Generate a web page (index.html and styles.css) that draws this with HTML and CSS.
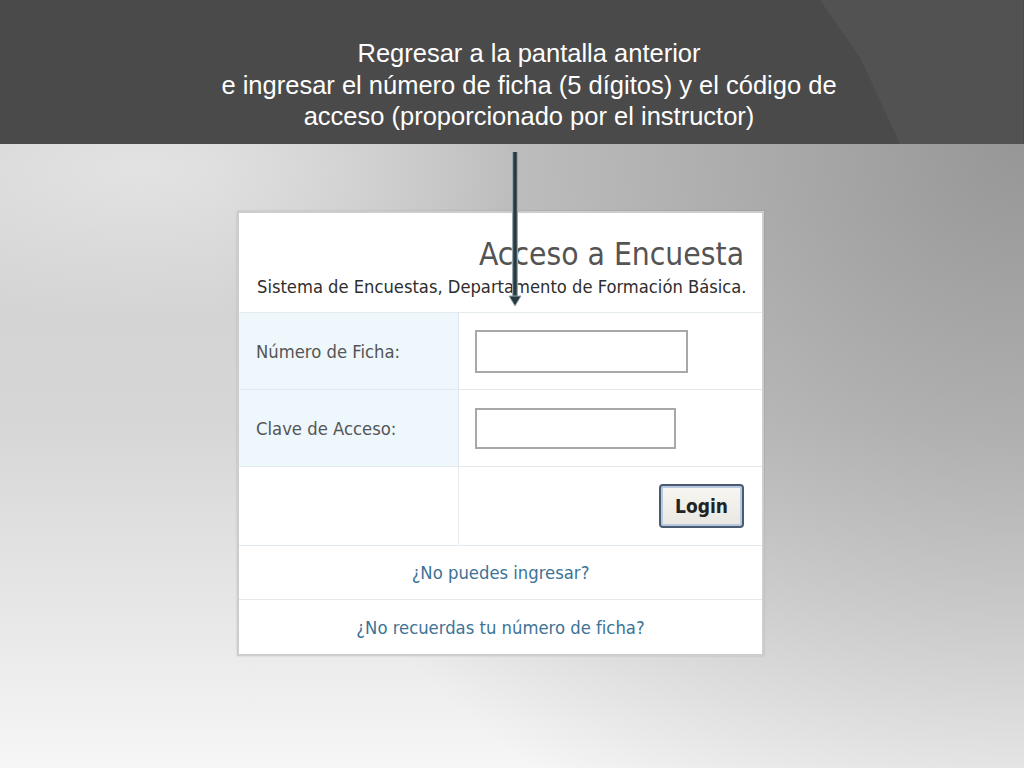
FILE: index.html
```html
<!DOCTYPE html>
<html lang="es">
<head>
<meta charset="utf-8">
<title>Acceso a Encuesta</title>
<link rel="stylesheet" href="styles.css">
</head>
<body>
<header class="banner">
  <div class="banner-panel"></div>
  <p class="banner-text">Regresar a la pantalla anterior<br>e ingresar el número de ficha (5 dígitos) y el código de<br>acceso (proporcionado por el instructor)</p>
</header>
<main class="stage">
  <section class="card">
    <div class="card-head">
      <h1 class="card-title">Acceso a Encuesta</h1>
      <p class="card-sub">Sistema de Encuestas, Departamento de Formación Básica.</p>
    </div>
    <div class="form-grid">
      <div class="cell label">Número de Ficha:</div>
      <div class="cell field"><span class="input input-wide"></span></div>
      <div class="cell label">Clave de Acceso:</div>
      <div class="cell field"><span class="input input-narrow"></span></div>
      <div class="cell blank"></div>
      <div class="cell action"><span class="btn">Login</span></div>
    </div>
    <div class="link-row link-first"><a class="link">¿No puedes ingresar?</a></div>
    <div class="link-row link-last"><a class="link">¿No recuerdas tu número de ficha?</a></div>
  </section>
  <svg class="arrow" width="14" height="160" viewBox="0 0 14 160" aria-hidden="true">
    <line x1="7" y1="0" x2="7" y2="148" stroke="#9aa8ae" stroke-width="6"/>
    <line x1="7" y1="0" x2="7" y2="148" stroke="#263a42" stroke-width="3.5"/>
    <polygon points="1,144 13,144 7,154" fill="#263a42" stroke="#9aa8ae" stroke-width="1"/>
  </svg>
</main>
</body>
</html>
```
FILE: styles.css
```css
* { box-sizing: border-box; }
html, body { margin: 0; padding: 0; }
body {
  width: 1024px;
  height: 768px;
  overflow: hidden;
  font-family: "DejaVu Sans Condensed", "DejaVu Sans", sans-serif;
  background:
    radial-gradient(ellipse 380px 150px at 140px 170px, rgba(232,232,232,0.75), rgba(232,232,232,0) 100%),
    radial-gradient(ellipse 820px 780px at 1024px 144px, rgba(140,140,140,0.85), rgba(140,140,140,0.45) 45%, rgba(140,140,140,0.12) 85%, rgba(140,140,140,0) 100%),
    linear-gradient(to bottom, #d2d2d2 0px, #d2d2d2 200px, #d6d6d6 420px, #e6e6e6 600px, #f6f6f6 768px);
}

.banner {
  position: relative;
  height: 144px;
  background: #4a4a4a;
  overflow: hidden;
}
.banner-panel {
  position: absolute;
  top: 0;
  right: 0;
  bottom: 0;
  left: 820px;
  background: #525252;
  clip-path: polygon(0 0, 100% 0, 100% 100%, 80px 100%, 40px 40%);
  border-right: 1px solid #4c4c4c;
}
.banner-text {
  position: relative;
  margin: 0;
  padding: 38px 0 0 34px;
  text-align: center;
  font-family: "Liberation Sans", Arial, sans-serif;
  font-size: 25.5px;
  line-height: 31.5px;
  color: #ffffff;
}

.stage {
  position: relative;
  padding-top: 67px;
}
.card {
  margin-left: 237px;
  width: 527px;
  background: #ffffff;
  border: 2px solid #cdcdcd;
  box-shadow: 0 0 2px rgba(0,0,0,0.15);
}
.card-head {
  height: 100px;
  padding: 21px 18px 0 18px;
  border-bottom: 1px solid #e4ecf0;
}
.card-title {
  margin: 0;
  text-align: right;
  font-weight: normal;
  font-size: 31.5px;
  line-height: 40px;
  color: #545454;
}
.card-sub {
  margin: 0;
  font-size: 18.2px;
  line-height: 25px;
  color: #2e2e2e;
  white-space: nowrap;
}

.form-grid {
  display: grid;
  grid-template-columns: 220px 1fr;
  grid-template-rows: 77px 77px 79px;
}
.cell {
  display: flex;
  align-items: center;
  border-bottom: 1px solid #e2eaef;
}
.label {
  background: #eef7fc;
  border-right: 1px solid #dfe8ee;
  padding-left: 17px;
  font-size: 18.3px;
  color: #555555;
}
.blank { border-right: 1px solid #e6ecef; }
.field { padding-left: 16px; }
.action { justify-content: flex-end; padding-right: 18px; }
.input {
  display: block;
  background: #ffffff;
  border: 2px solid #a8a8a8;
}
.input-wide { width: 213px; height: 43px; }
.input-narrow { width: 201px; height: 41px; }
.btn {
  display: flex;
  align-items: center;
  justify-content: center;
  width: 85px;
  height: 44px;
  border: 2px solid #4b5a6e;
  border-radius: 4px;
  box-shadow: inset 0 0 0 2px #b7c9e3;
  background: linear-gradient(#f7f6f2, #e9e7e0);
  font-weight: bold;
  font-size: 19px;
  color: #222222;
}

.link-row {
  display: flex;
  align-items: center;
  justify-content: center;
}
.link-first { height: 54px; border-bottom: 1px solid #e6e9ea; }
.link-last { height: 54px; }
.link {
  font-size: 18.3px;
  color: #3d7396;
}

.arrow {
  position: absolute;
  top: 8px;
  left: 508px;
}
```
